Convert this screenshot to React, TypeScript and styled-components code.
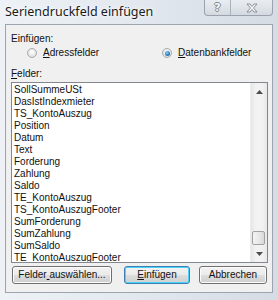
import React from "react";
import styled, { createGlobalStyle } from "styled-components";

const Global = createGlobalStyle`
  html, body { margin: 0; padding: 0; background: #dfe5eb; }
  body { font-family: "Liberation Sans", Arial, sans-serif; }
  * { box-sizing: border-box; }
`;

const Window = styled.div`
  width: 278px;
  height: 300px;
  display: flex;
  flex-direction: column;
  background: linear-gradient(90deg, #eef2f6 0%, #e4eaf0 40%, #dde3ea 70%, #d6dce3 100%);
  overflow: hidden;
`;

const TitleBar = styled.div`
  height: 24px;
  flex: none;
  display: flex;
  align-items: flex-start;
  justify-content: space-between;
`;

const Title = styled.div`
  font-family: "Noto Sans", sans-serif;
  font-size: 12.5px;
  color: #1a1a1a;
  padding: 4px 0 0 5px;
  line-height: 16px;
  text-shadow: 0 0 6px #ffffff, 0 0 3px #ffffff;
`;

const CaptionGroup = styled.div`
  display: flex;
  margin-right: 5px;
  height: 16px;
  border: 1px solid #9aa3ad;
  border-top: none;
  border-radius: 0 0 4px 4px;
  background: linear-gradient(180deg, #e9edf1 0%, #dde2e8 60%, #d3d9df 100%);
  overflow: hidden;
`;

const CaptionButton = styled.div<{ $w: number; $last?: boolean }>`
  width: ${(p) => p.$w}px;
  height: 100%;
  display: flex;
  align-items: center;
  justify-content: center;
  border-right: ${(p) => (p.$last ? "none" : "1px solid #a9b1ba")};
  font-family: "DejaVu Sans", sans-serif;
  font-size: 11px;
  font-weight: bold;
  color: #f7f8fa;
  text-shadow: -1px 0 #7f8790, 1px 0 #7f8790, 0 -1px #7f8790, 0 1px #7f8790;
`;

const Client = styled.div`
  flex: 1;
  margin: 0 5px 7px 5px;
  background: #f0f0f0;
  border: 1px solid #9ba5b0;
  display: flex;
  flex-direction: column;
  padding: 8px 4px 0 5px;
  font-size: 10px;
  color: #111;
`;

const Label = styled.div`
  line-height: 12px;
  height: 12px;
`;

const RadioRow = styled.div`
  display: grid;
  grid-template-columns: 135px 1fr;
  margin-top: 2px;
  padding-left: 16px;
  height: 12px;
`;

const RadioOption = styled.div`
  display: flex;
  align-items: center;
  gap: 6px;
  height: 12px;
  line-height: 12px;
`;

const RadioCircle = styled.span<{ $checked?: boolean }>`
  width: 10px;
  height: 10px;
  border-radius: 50%;
  border: 1px solid #a7abb0;
  background: radial-gradient(circle at 50% 40%, #ffffff 0%, #e8e8e8 55%, #cfd2d5 100%);
  display: flex;
  align-items: center;
  justify-content: center;
  &::after {
    content: "";
    display: ${(p) => (p.$checked ? "block" : "none")};
    width: 5px;
    height: 5px;
    border-radius: 50%;
    background: radial-gradient(circle at 40% 35%, #8fd0f5 0%, #2a7fc0 55%, #1c4f86 100%);
  }
`;

const U = styled.span`
  text-decoration: underline;
  text-underline-offset: 1px;
`;

const FieldsLabel = styled(Label)`
  margin-top: 9px;
`;

const ListBox = styled.div`
  margin-top: 2px;
  height: 181px;
  border: 1px solid #828790;
  background: #ffffff;
  display: flex;
`;

const Items = styled.div`
  flex: 1;
  padding: 1px 0 0 2px;
  overflow: hidden;
`;

const Item = styled.div`
  height: 12px;
  line-height: 12px;
  white-space: nowrap;
`;

const ScrollBar = styled.div`
  width: 17px;
  flex: none;
  display: flex;
  flex-direction: column;
  background: linear-gradient(90deg, #e6e6e6 0%, #f2f2f2 30%, #f2f2f2 70%, #e8e8e8 100%);
  border-left: 1px solid #ececec;
`;

const Arrow = styled.div`
  height: 17px;
  display: flex;
  align-items: center;
  justify-content: center;
`;

const Track = styled.div`
  flex: 1;
  display: flex;
  flex-direction: column;
  justify-content: flex-end;
  padding: 0 2px 0 1px;
`;

const Thumb = styled.div`
  height: 14px;
  border: 1px solid #a2a2a2;
  border-radius: 2px;
  background: linear-gradient(90deg, #f3f3f3 0%, #e9e9e9 50%, #d9d9d9 100%);
`;

const ButtonRow = styled.div`
  display: flex;
  margin-top: 3px;
  padding-left: 1px;
  gap: 12px;
`;

const Button = styled.div<{ $w: number; $default?: boolean; $ml?: number }>`
  width: ${(p) => p.$w}px;
  height: 18px;
  margin-left: ${(p) => p.$ml ?? 0}px;
  border: 1px solid ${(p) => (p.$default ? "#3c7fb1" : "#707070")};
  border-radius: 3px;
  background: linear-gradient(180deg, #f2f2f2 0%, #ebebeb 48%, #dddddd 52%, #cfcfcf 100%);
  box-shadow: inset 0 0 0 1px ${(p) => (p.$default ? "#48d4fc" : "#fcfcfc")};
  display: flex;
  align-items: center;
  justify-content: center;
  line-height: 12px;
  white-space: pre;
`;

const items = [
  "SollSummeUSt",
  "DasIstIndexmieter",
  "TS_KontoAuszug",
  "Position",
  "Datum",
  "Text",
  "Forderung",
  "Zahlung",
  "Saldo",
  "TE_KontoAuszug",
  "TS_KontoAuszugFooter",
  "SumForderung",
  "SumZahlung",
  "SumSaldo",
  "TE_KontoAuszugFooter",
];

export default function App() {
  return (
    <>
      <Global />
      <Window>
        <TitleBar>
          <Title>Seriendruckfeld einfügen</Title>
          <CaptionGroup>
            <CaptionButton $w={26}>?</CaptionButton>
            <CaptionButton $w={41} $last>
              <svg width="12" height="10" viewBox="0 0 12 10">
                <path
                  d="M1 1 L4 1 L6 3.5 L8 1 L11 1 L7.5 5 L11 9 L8 9 L6 6.5 L4 9 L1 9 L4.5 5 Z"
                  fill="#f7f8fa"
                  stroke="#7f8790"
                  strokeWidth="0.9"
                  strokeLinejoin="round"
                />
              </svg>
            </CaptionButton>
          </CaptionGroup>
        </TitleBar>
        <Client>
          <Label>Einfügen:</Label>
          <RadioRow>
            <RadioOption>
              <RadioCircle />
              <span>
                <U>A</U>dressfelder
              </span>
            </RadioOption>
            <RadioOption>
              <RadioCircle $checked />
              <span>
                <U>D</U>atenbankfelder
              </span>
            </RadioOption>
          </RadioRow>
          <FieldsLabel>
            <U>F</U>elder:
          </FieldsLabel>
          <ListBox>
            <Items>
              {items.map((t) => (
                <Item key={t}>{t}</Item>
              ))}
            </Items>
            <ScrollBar>
              <Arrow>
                <svg width="7" height="4" viewBox="0 0 7 4">
                  <path d="M0 4 L3.5 0 L7 4 Z" fill="#4d4d4d" />
                </svg>
              </Arrow>
              <Track>
                <Thumb />
              </Track>
              <Arrow>
                <svg width="7" height="4" viewBox="0 0 7 4">
                  <path d="M0 0 L3.5 4 L7 0 Z" fill="#4d4d4d" />
                </svg>
              </Arrow>
            </ScrollBar>
          </ListBox>
          <ButtonRow>
            <Button $w={100}>
              Felder<U> </U>auswählen...
            </Button>
            <Button $w={66} $default>
              <span>
                <U>E</U>infügen
              </span>
            </Button>
            <Button $w={68} $ml={-3}>
              Abbrechen
            </Button>
          </ButtonRow>
        </Client>
      </Window>
    </>
  );
}
